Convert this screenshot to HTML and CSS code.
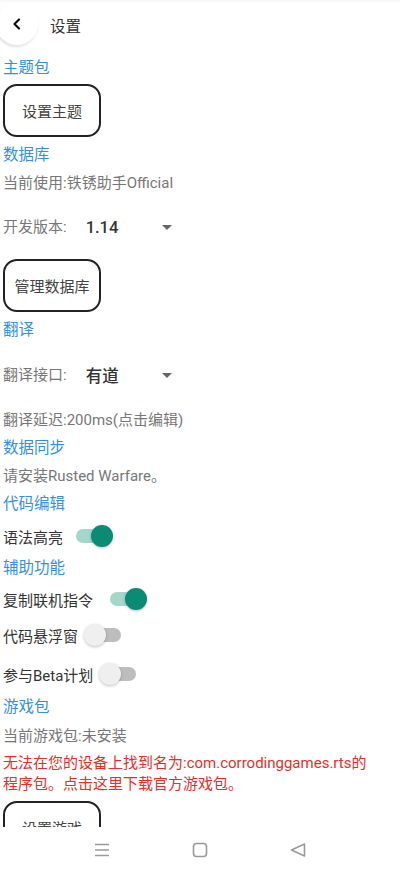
FILE: index.html
```html
<!DOCTYPE html>
<html lang="zh-CN">
<head>
    <meta charset="UTF-8">
    <meta name="viewport" content="width=device-width, initial-scale=1.0">
    <title>设置</title>
    <link rel="stylesheet" href="styles.css">
</head>
<body>
    <div class="screen">
        <div class="content">
            <div class="topbar">
                <div class="back-btn">
                    <svg width="12" height="12" viewBox="0 0 12 12"><path d="M8 1.5 L3.5 6 L8 10.5" fill="none" stroke="#111" stroke-width="2.2" stroke-linecap="round" stroke-linejoin="round"/></svg>
                </div>
                <div class="title">设置</div>
            </div>

            <div class="section-title first">主题包</div>
            <div class="btn">设置主题</div>

            <div class="section-title gap">数据库</div>
            <div class="text">当前使用:铁锈助手Official</div>
            <div class="spinner-row tall">
                <span class="text">开发版本:</span>
                <div class="spinner"><span class="value">1.14</span><span class="arrow"></span></div>
            </div>
            <div class="btn">管理数据库</div>

            <div class="section-title gap">翻译</div>
            <div class="spinner-row taller">
                <span class="text">翻译接口:</span>
                <div class="spinner"><span class="value">有道</span><span class="arrow"></span></div>
            </div>
            <div class="text">翻译延迟:200ms(点击编辑)</div>

            <div class="section-title">数据同步</div>
            <div class="text">请安装Rusted Warfare。</div>

            <div class="section-title">代码编辑</div>
            <div class="switch-row r36">
                <span class="label">语法高亮</span>
                <span class="switch on"><span class="track"></span><span class="thumb"></span></span>
            </div>

            <div class="section-title">辅助功能</div>
            <div class="switch-row r34">
                <span class="label">复制联机指令</span>
                <span class="switch on wide"><span class="track"></span><span class="thumb"></span></span>
            </div>
            <div class="switch-row r38">
                <span class="label">代码悬浮窗</span>
                <span class="switch"><span class="track"></span><span class="thumb"></span></span>
            </div>
            <div class="switch-row r40">
                <span class="label">参与Beta计划</span>
                <span class="switch"><span class="track"></span><span class="thumb"></span></span>
            </div>

            <div class="section-title short">游戏包</div>
            <div class="text r32">当前游戏包:未安装</div>
            <div class="error">无法在您的设备上找到名为:com.corrodinggames.rts的<br>程序包。点击这里下载官方游戏包。</div>
            <div class="btn last">设置游戏</div>
        </div>

        <div class="navbar">
            <svg width="16" height="16" viewBox="0 0 16 16"><path d="M1 2.5 H15 M1 8 H15 M1 13.5 H15" stroke="#9a9a9a" stroke-width="1.6"/></svg>
            <svg width="16" height="16" viewBox="0 0 16 16"><rect x="1.5" y="1.5" width="13" height="13" rx="3" fill="none" stroke="#9a9a9a" stroke-width="1.6"/></svg>
            <svg width="16" height="16" viewBox="0 0 16 16"><path d="M14.5 2 L1.5 8 L14.5 14 Z" fill="none" stroke="#9a9a9a" stroke-width="1.6" stroke-linejoin="round"/></svg>
        </div>
    </div>
</body>
</html>
```

FILE: styles.css
```css
body {
    margin: 0;
    background: #fff;
    font-family: Roboto, "Noto Sans CJK SC", sans-serif;
    font-size: 15px;
}
.screen {
    width: 400px;
    height: 875px;
    display: flex;
    flex-direction: column;
    overflow: hidden;
    background: #fff;
}
.content {
    flex: 1;
    overflow: hidden;
    padding-left: 3px;
    box-shadow: inset 0 3px 3px -2px rgba(0,0,0,0.06);
}
.topbar {
    height: 54px;
    display: flex;
    align-items: center;
    margin-left: -3px;
}
.back-btn {
    width: 42px;
    height: 42px;
    border-radius: 50%;
    margin-left: -4px;
    margin-top: -6px;
    background: #fff;
    box-shadow: -1px 2px 3px rgba(0,0,0,0.12);
    display: flex;
    align-items: center;
    justify-content: center;
}
.title {
    margin-left: 12px;
    margin-top: -4px;
    color: #333;
    font-size: 15.5px;
}
.section-title {
    color: #3590dc;
    font-size: 15.5px;
    line-height: 28px;
}
.section-title.gap {
    margin-top: 4px;
}
.section-title.short {
    line-height: 26px;
}
.text {
    color: #777;
    line-height: 28px;
}
.text.r32 {
    line-height: 32px;
}
.btn {
    width: 94px;
    height: 49px;
    margin-top: 2px;
    border: 2px solid #222;
    border-radius: 14px;
    display: flex;
    align-items: center;
    justify-content: center;
    color: #444;
    font-size: 15px;
}
.btn.last {
    margin-top: 6px;
}
.spinner-row {
    display: flex;
    align-items: center;
}
.spinner-row.tall {
    height: 60px;
}
.spinner-row.taller {
    height: 62px;
}
.spinner {
    width: 86px;
    margin-left: 19px;
    display: flex;
    align-items: center;
    justify-content: space-between;
    color: #333;
    font-size: 16.5px;
}
.spinner .value {
    font-weight: 500;
}
.arrow {
    width: 0;
    height: 0;
    border-left: 5px solid transparent;
    border-right: 5px solid transparent;
    border-top: 5px solid #666;
}
.switch-row {
    display: flex;
    align-items: center;
    color: #333;
}
.switch-row.r34 { height: 34px; }
.switch-row.r36 { height: 36px; }
.switch-row.r38 { height: 38px; }
.switch-row.r40 { height: 40px; }
.switch {
    position: relative;
    width: 40px;
    height: 24px;
    margin-left: 6px;
}
.switch.on {
    margin-left: 10px;
}
.switch.wide {
    margin-left: 14px;
}
.switch .track {
    position: absolute;
    left: 3px;
    right: 3px;
    top: 5px;
    height: 14px;
    border-radius: 7px;
    background: #bdbdbd;
}
.switch .thumb {
    position: absolute;
    left: 0;
    top: 1px;
    width: 22px;
    height: 22px;
    border-radius: 50%;
    background: #efefef;
    box-shadow: 0 1px 3px rgba(0,0,0,0.25);
}
.switch.on .track {
    background: #a5d6cc;
}
.switch.on .thumb {
    left: 18px;
    background: #0b8a74;
}
.error {
    color: #e0302a;
    line-height: 21px;
    margin-top: 1px;
    white-space: nowrap;
}
.navbar {
    height: 46px;
    flex-shrink: 0;
    background: #fff;
    display: flex;
    align-items: center;
    justify-content: center;
    gap: 82px;
    padding-bottom: 2px;
}
```
